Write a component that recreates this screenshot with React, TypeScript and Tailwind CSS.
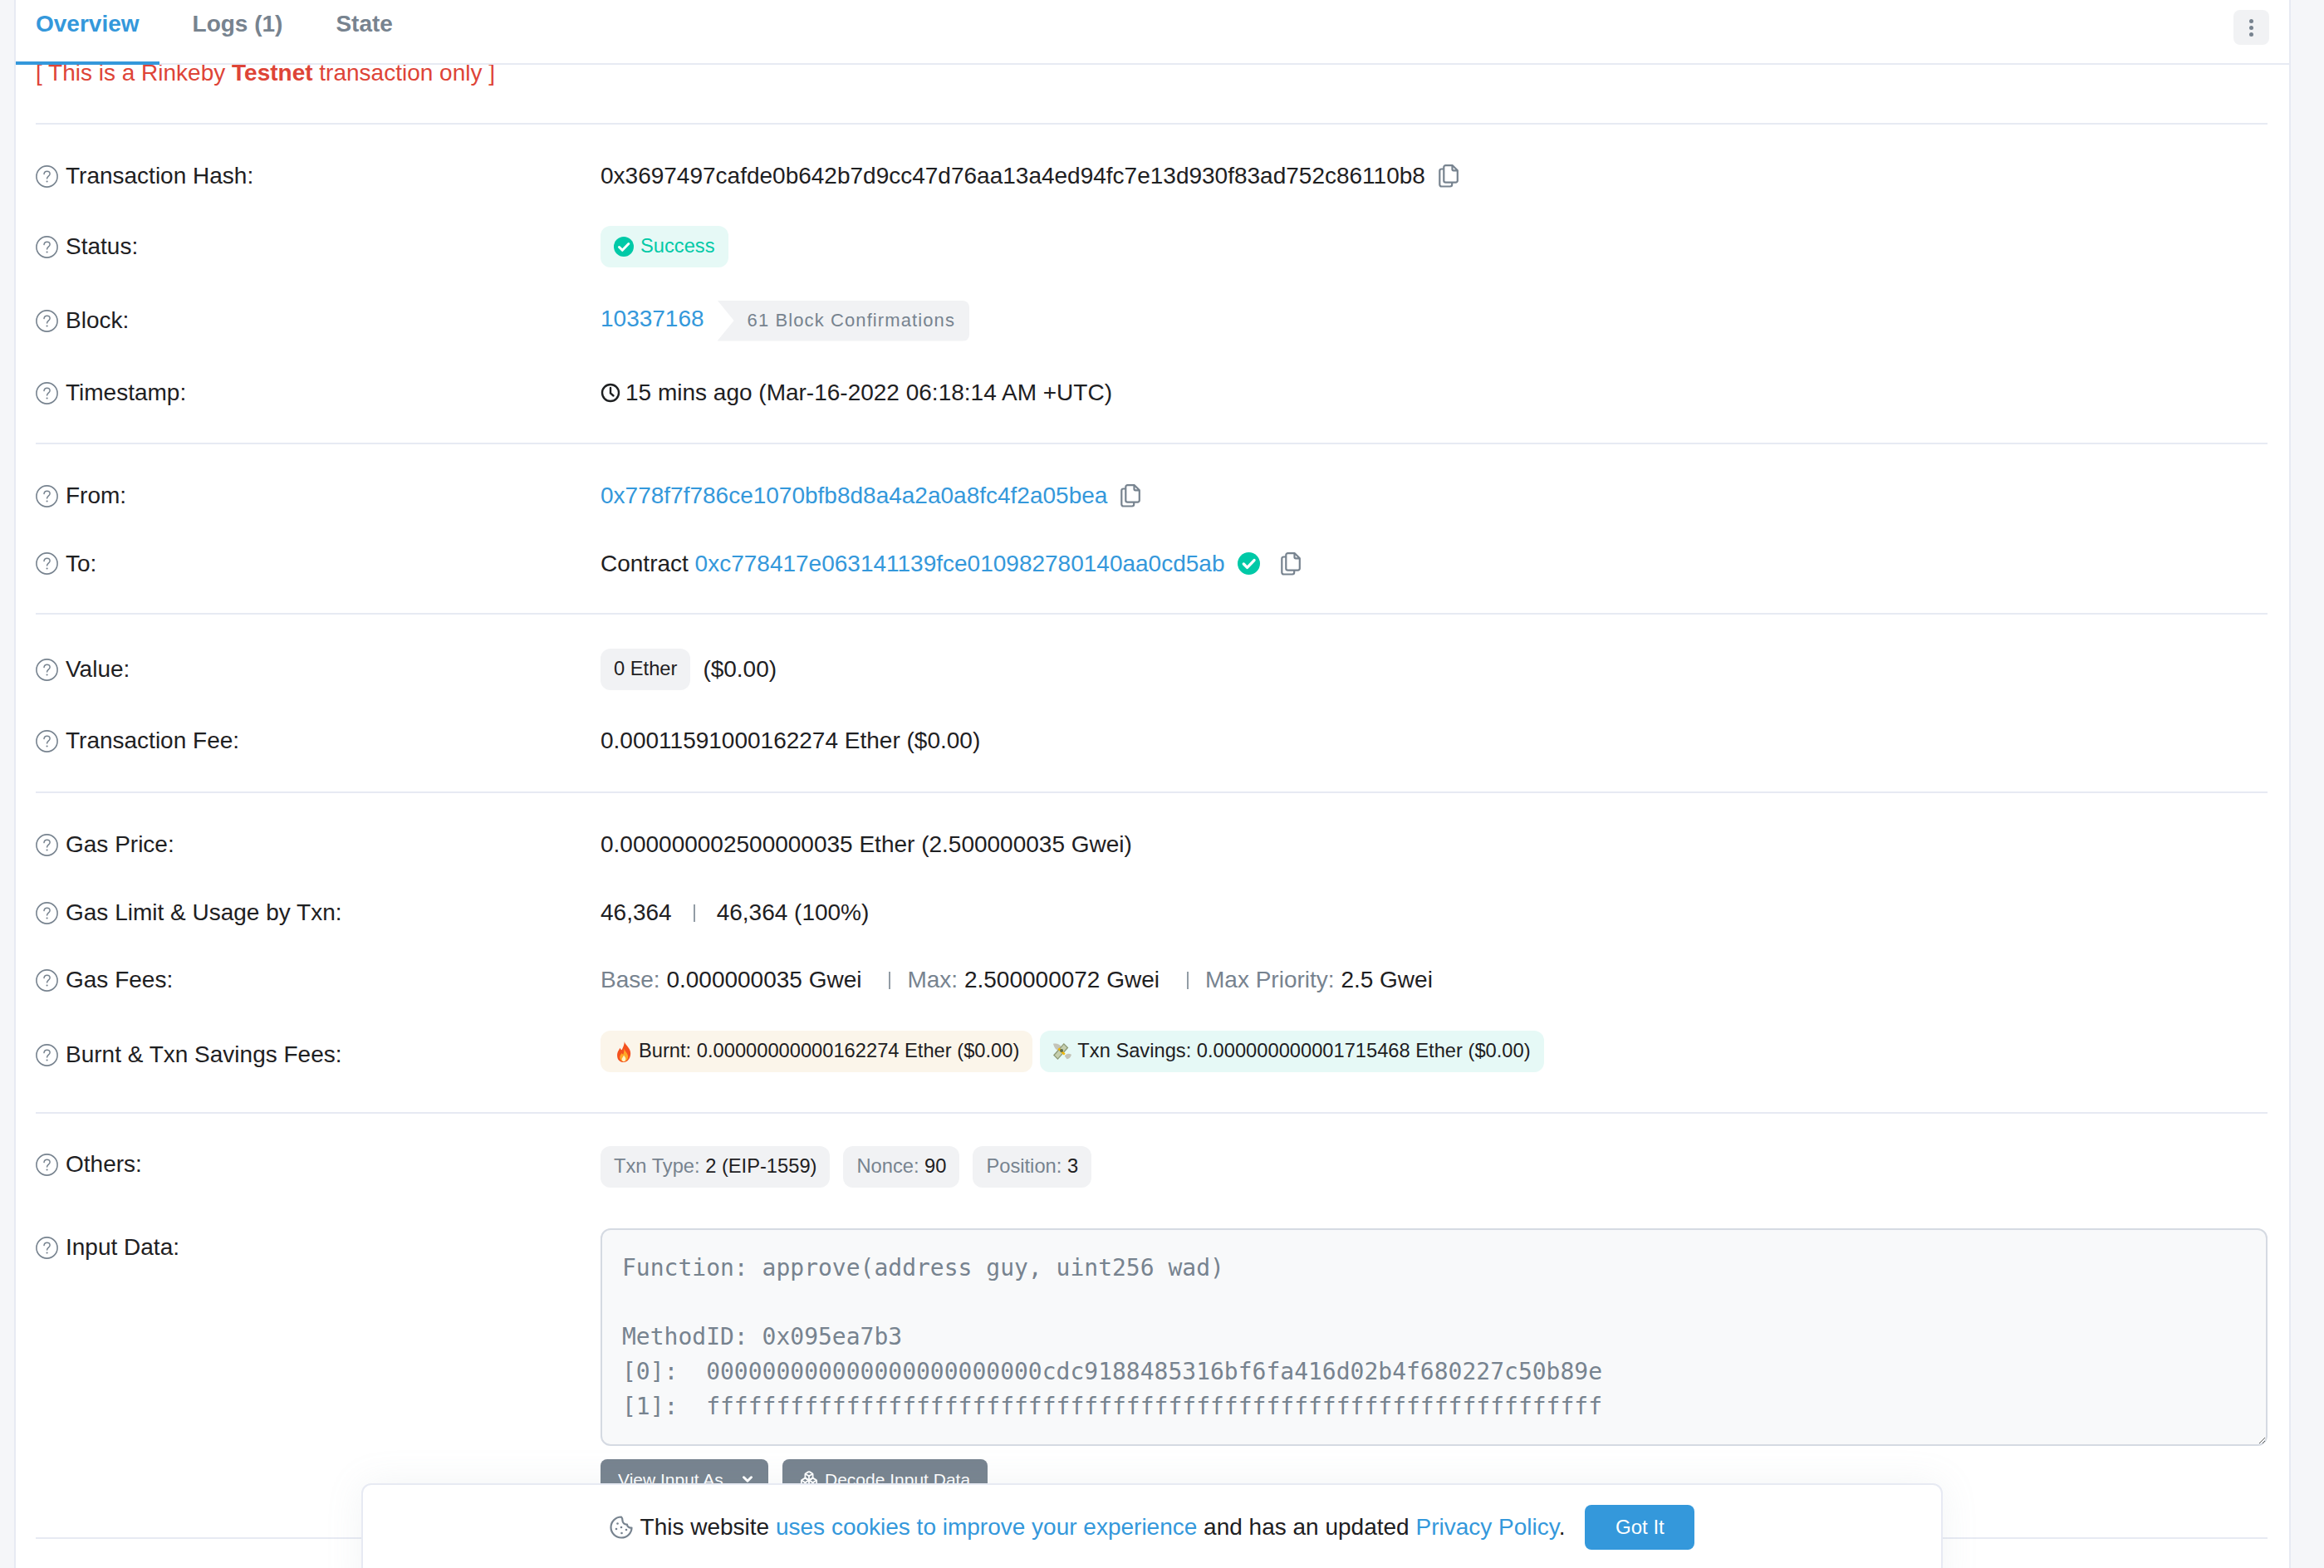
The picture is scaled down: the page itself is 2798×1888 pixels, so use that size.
import React from "react";
import { ChevronDown, Boxes } from "lucide-react";

const HelpIcon = () => (
  <svg viewBox="0 0 27 27" className="w-[27px] h-[27px] shrink-0 mr-[9px]" fill="none">
    <circle cx="13.5" cy="13.5" r="12.6" stroke="#77838f" strokeWidth="1.6" />
    <path d="M10 10.6c.2-2.2 1.7-3.4 3.6-3.4 2 0 3.5 1.3 3.5 3.1 0 2.9-3.5 2.9-3.5 5.8" stroke="#77838f" strokeWidth="1.5" strokeLinecap="round" />
    <circle cx="13.6" cy="19.5" r="1.1" fill="#77838f" />
  </svg>
);

const CopyIcon = ({ className = "" }: { className?: string }) => (
  <svg viewBox="0 0 24 28" className={`w-6 h-7 shrink-0 ${className}`} fill="none" stroke="#77838f" strokeWidth="2.2" strokeLinejoin="round">
    <path d="M6 5.5H3.5a2.2 2.2 0 0 0-2.2 2.2v16.600a2.2 2.2 0 0 0 2.2 2.2h10.500a2.2 2.2 0 0 0 2.2-2.2v-2.3" />
    <path d="M8.5 1.2h8.300l6 6v12.300a2.2 2.2 0 0 1-2.2 2.2H8.5a2.2 2.2 0 0 1-2.2-2.2V3.400a2.2 2.2 0 0 1 2.2-2.2z" fill="#fff" />
    <path d="M16.5 1.5v4.300a1.5 1.5 0 0 0 1.5 1.5h4.5" />
  </svg>
);

const CheckBadge = ({ size }: { size: string }) => (
  <svg viewBox="0 0 24 24" className={`${size} shrink-0`}>
    <circle cx="12" cy="12" r="12" fill="#00c9a7" />
    <path d="M6.5 12.5l3.8 3.8 7.5-7.8" fill="none" stroke="#fff" strokeWidth="3" strokeLinecap="round" strokeLinejoin="round" />
  </svg>
);

const FlameIcon = () => (
  <svg viewBox="0 0 22 32" className="w-[18px] h-[25px] shrink-0 ml-[3px] mr-[9px]">
    <path d="M12 0c1 5 7 8 9 15 2 8-3 17-10 17S0 27 1 19c.5-4 3-6 4-9 1 2 2 3 3 3 2-4 4-8 4-13z" fill="#f4511e" />
    <path d="M11.5 11c1 4 5 7 6 11 .8 5-3 9-6.5 9s-7-4-6-8c.5-2 2-3 3-5 .5 1 1 1.5 2 2 1-2 1.7-5 1.5-9z" fill="#ffa726" />
    <path d="M11 21c1 2 3 3.5 3 6 0 2.500-1.5 4-3 4s-3.5-1.5-3-4c.3-2 2.5-3.5 3-6z" fill="#fff3c4" />
  </svg>
);

const MoneyIcon = () => (
  <svg viewBox="0 0 26 24" className="w-6 h-[22px] shrink-0 -ml-[1px] mr-[6px]">
    <path d="M1 2c4-1 8 0 11 4l-4 5C4 10 2 6 1 2z" fill="#c4c4b8" />
    <path d="M25 16c-4-2-7-1-9 2l3 4c3 0 5-2 6-6z" fill="#c4c4b8" />
    <path d="M15 1l6 6-14 16-6-6z" fill="#8d9a76" />
    <path d="M15 3l4 4-12 14-4-4z" fill="#c5cfae" />
    <path d="M9 7l8 8-2 2-8-8z" fill="#f2b705" />
    <circle cx="12" cy="11" r="2.2" fill="#5d6b4a" />
  </svg>
);

const CookieIcon = () => (
  <svg viewBox="0 0 28 28" className="w-[28px] h-[28px] shrink-0 mr-[9px]" fill="none" stroke="#77838f" strokeWidth="2.2">
    <path d="M14 1.5C7 1.5 1.5 7.2 1.5 14S7 26.5 14 26.5 26.5 21 26.5 14.5c-3 .5-5.5-1.5-5.5-4-3 .3-5.5-1.8-5.5-4.500 0-1.500-.5-3.500-1.500-4.500z" strokeLinejoin="round" />
    <circle cx="9.5" cy="9.5" r="1.3" fill="#77838f" stroke="none" />
    <circle cx="8" cy="16" r="1.3" fill="#77838f" stroke="none" />
    <circle cx="14" cy="14" r="1.3" fill="#77838f" stroke="none" />
    <circle cx="14.5" cy="21" r="1.3" fill="#77838f" stroke="none" />
    <circle cx="20" cy="17" r="1.3" fill="#77838f" stroke="none" />
  </svg>
);

const ClockIcon = () => (
  <svg viewBox="0 0 24 24" className="w-6 h-6 shrink-0 mr-[6px]" fill="none" stroke="#1e2022" strokeWidth="2.4">
    <circle cx="12" cy="12" r="10" />
    <path d="M12 6v6.500l3.500 3" strokeLinecap="round" />
  </svg>
);

const Row = ({ label, height, children }: { label: string; height: string; children?: React.ReactNode }) => (
  <div className={`flex items-center ${height}`}>
    <div className="flex items-center w-[680px] shrink-0">
      <HelpIcon />
      <span>{label}</span>
    </div>
    <div className="flex items-center min-w-0">{children}</div>
  </div>
);

const Pill = ({ className, children }: { className: string; children: React.ReactNode }) => (
  <span className={`flex items-center h-[50px] px-4 rounded-xl text-[23.7px] whitespace-pre ${className}`}>{children}</span>
);

const Muted = ({ children }: { children: React.ReactNode }) => <span className="text-[#77838f]">{children}</span>;
const Link = ({ children }: { children: React.ReactNode }) => <span className="text-[#3498db]">{children}</span>;

const inputLines = `Function: approve(address guy, uint256 wad)

MethodID: 0x095ea7b3
[0]:  000000000000000000000000cdc9188485316bf6fa416d02b4f680227c50b89e
[1]:  ffffffffffffffffffffffffffffffffffffffffffffffffffffffffffffffff`;

export default function App() {
  return (
    <div className="relative flex w-full h-[1888px] overflow-hidden bg-[#f5f6f9] text-[#1e2022] text-[28px] leading-none font-['Liberation_Sans',Arial,sans-serif]">
      <div className="w-[19px] shrink-0 border-r-2 border-[#e7eaf3]" />
      <main className="flex-1 min-w-0 bg-white">
        <nav className="relative flex items-start h-[78px] border-b-2 border-[#e7eaf3] font-bold text-[#77838f] pl-6 pr-6">
          <span className="text-[#3498db] mt-[15px]">Overview</span>
          <span className="ml-[64px] mt-[15px]">Logs (1)</span>
          <span className="ml-[64px] mt-[15px]">State</span>
          <span className="absolute left-0 top-[74px] w-[173px] h-1 bg-[#3498db]" />
          <button className="ml-auto mt-3 flex items-center justify-center w-[43px] h-[42px] rounded-lg bg-[#f1f2f4]">
            <span className="flex flex-col gap-[3px]">
              <span className="w-[5px] h-[5px] rounded-full bg-[#77838f]" />
              <span className="w-[5px] h-[5px] rounded-full bg-[#77838f]" />
              <span className="w-[5px] h-[5px] rounded-full bg-[#77838f]" />
            </span>
          </button>
        </nav>
        <div className="pl-6 pr-[26px]">
          <div className="h-[72px] leading-[20px] border-b-2 border-[#e7eaf3] text-[#de4437]">
            [ This is a Rinkeby <b>Testnet</b> transaction only ]
          </div>
          <section className="pt-5 pb-[19px] border-b-2 border-[#e7eaf3]">
            <Row label="Transaction Hash:" height="h-[84px]">
              <span>0x3697497cafde0b642b7d9cc47d76aa13a4ed94fc7e13d930f83ad752c86110b8</span>
              <CopyIcon className="ml-4" />
            </Row>
            <Row label="Status:" height="h-[86px]">
              <Pill className="bg-[#e6f9f6] text-[#00c9a7]">
                <CheckBadge size="w-6 h-6 mr-[8px]" />
                Success
              </Pill>
            </Row>
            <Row label="Block:" height="h-[92px]">
              <span className="text-[#3498db] mb-1">10337168</span>
              <span className="flex items-center h-[49px] ml-4 pl-9 pr-[17px] bg-[#f1f2f4] text-[#77838f] text-[22px] tracking-[1.1px] [clip-path:polygon(0_0,100%_0,100%_100%,0_100%,20px_50%)] rounded-r-lg">
                61 Block Confirmations
              </span>
            </Row>
            <Row label="Timestamp:" height="h-[82px]">
              <ClockIcon />
              15 mins ago (Mar-16-2022 06:18:14 AM +UTC)
            </Row>
          </section>
          <section className="pt-5 pb-5 border-b-2 border-[#e7eaf3]">
            <Row label="From:" height="h-[84px]">
              <Link>0x778f7f786ce1070bfb8d8a4a2a0a8fc4f2a05bea</Link>
              <CopyIcon className="ml-4" />
            </Row>
            <Row label="To:" height="h-[79px]">
              <span className="whitespace-pre">Contract </span>
              <Link>0xc778417e063141139fce010982780140aa0cd5ab</Link>
              <CheckBadge size="w-[27px] h-[27px] ml-4" />
              <CopyIcon className="ml-[25px]" />
            </Row>
          </section>
          <section className="pt-6 pb-[17px] border-b-2 border-[#e7eaf3]">
            <Row label="Value:" height="h-[84px]">
              <Pill className="bg-[#f1f2f4]">0 Ether</Pill>
              <span className="ml-[15px]">($0.00)</span>
            </Row>
            <Row label="Transaction Fee:" height="h-[88px]">
              0.00011591000162274 Ether ($0.00)
            </Row>
          </section>
          <section className="pt-5 pb-5 border-b-2 border-[#e7eaf3]">
            <Row label="Gas Price:" height="h-[84px]">
              0.000000002500000035 Ether (2.500000035 Gwei)
            </Row>
            <Row label="Gas Limit &amp; Usage by Txn:" height="h-[80px]">
              46,364
              <span className="w-[2px] h-[21px] bg-[#77838f] opacity-80 mx-[26px]" />
              46,364 (100%)
            </Row>
            <Row label="Gas Fees:" height="h-[82px]">
              <span className="whitespace-pre"><Muted>Base: </Muted>0.000000035 Gwei</span>
              <span className="w-[2px] h-[21px] bg-[#77838f] opacity-80 ml-[33px] mr-[20px]" />
              <span className="whitespace-pre"><Muted>Max: </Muted>2.500000072 Gwei</span>
              <span className="w-[2px] h-[21px] bg-[#77838f] opacity-80 ml-[33px] mr-[20px]" />
              <span className="whitespace-pre"><Muted>Max Priority: </Muted>2.5 Gwei</span>
            </Row>
            <Row label="Burnt &amp; Txn Savings Fees:" height="h-[98px]">
              <div className="flex gap-[9px] mb-2">
                <Pill className="bg-[#fbf5ea]">
                  <FlameIcon />
                  Burnt: 0.00000000000162274 Ether ($0.00)
                </Pill>
                <Pill className="bg-[#e6f9f6]">
                  <MoneyIcon />
                  Txn Savings: 0.000000000001715468 Ether ($0.00)
                </Pill>
              </div>
            </Row>
          </section>
          <section className="pt-10 pb-[22px] border-b-2 border-[#e7eaf3]">
            <div className="flex">
              <div className="flex items-center w-[680px] shrink-0 h-[42px]">
                <HelpIcon />
                <span>Others:</span>
              </div>
              <div className="flex gap-4 -mt-[1px]">
                <Pill className="bg-[#f1f2f4]"><Muted>Txn Type: </Muted>2 (EIP-1559)</Pill>
                <Pill className="bg-[#f1f2f4]"><Muted>Nonce: </Muted>90</Pill>
                <Pill className="bg-[#f1f2f4]"><Muted>Position: </Muted>3</Pill>
              </div>
            </div>
            <div className="flex mt-[51px]">
              <div className="flex items-center w-[680px] shrink-0 h-[42px]">
                <HelpIcon />
                <span>Input Data:</span>
              </div>
              <div className="flex-1 min-w-0 -mt-[2px]">
                <textarea
                  readOnly
                  value={inputLines}
                  spellCheck={false}
                  className="block w-full h-[262px] py-[25px] px-[24px] bg-[#f8f9fa] border-2 border-[#d5dae2] rounded-xl text-[#77838f] text-[28px] leading-[41.7px] font-['DejaVu_Sans_Mono',monospace] outline-none resize-y overflow-hidden"
                />
                <div className="flex gap-[17px] mt-4 h-[72px]">
                  <button className="flex items-center h-[50px] w-[202px] pl-[21px] pb-[2px] rounded-lg bg-[#77838f] text-white text-[21px] gap-[20px]">
                    View Input As
                    <ChevronDown size={18} strokeWidth={4} />
                  </button>
                  <button className="flex items-center h-[50px] w-[247px] pl-[21px] pb-[2px] rounded-lg bg-[#77838f] text-white text-[21px] gap-2">
                    <Boxes size={22} strokeWidth={2} />
                    Decode Input Data
                  </button>
                </div>
              </div>
            </div>
          </section>
        </div>
      </main>
      <div className="w-[42px] shrink-0 border-l-2 border-[#e7eaf3]" />
      <div className="absolute left-[435px] top-[1786px] w-[1904px] h-[140px] flex items-start justify-center bg-white border-2 border-[#e7eaf3] rounded-xl shadow-[0_0_45px_rgba(151,164,175,0.12)]">
        <div className="flex items-center mt-6">
          <CookieIcon />
          <span className="whitespace-pre">This website <Link>uses cookies to improve your experience</Link> and has an updated <Link>Privacy Policy</Link>.</span>
          <button className="flex items-center justify-center w-[132px] h-[54px] ml-6 rounded-lg bg-[#3498db] text-white text-[24px]">Got It</button>
        </div>
      </div>
    </div>
  );
}
